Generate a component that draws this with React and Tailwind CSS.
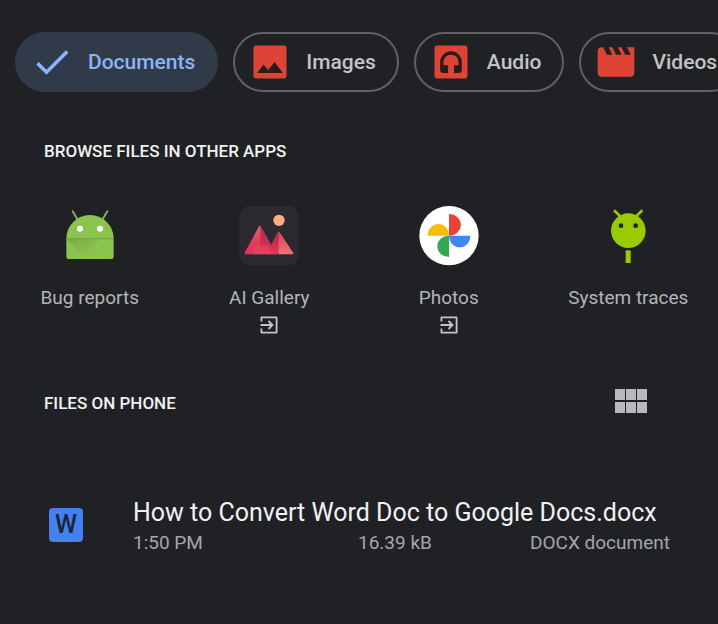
import clsx from 'clsx'

const DoneIcon = () => (
  <svg viewBox="0 0 24 24" className="size-11 shrink-0" fill="currentColor" aria-hidden="true">
    <path d="M9 16.2L4.8 12l-1.4 1.4L9 19 21 7l-1.4-1.4L9 16.2z" />
  </svg>
)

const ImageIcon = () => (
  <svg viewBox="0 0 24 24" className="size-11 shrink-0" aria-hidden="true">
    <rect x="3" y="3" width="18" height="18" rx="1.5" fill="#dd4436" />
    <path d="M5 18l3.5-4.6 2.5 3 3.5-4.4 4.5 6z" fill="#2f1a1b" />
  </svg>
)

const AudioIcon = () => (
  <svg viewBox="0 0 24 24" className="size-11 shrink-0" aria-hidden="true">
    <rect x="3" y="3" width="18" height="18" rx="1.5" fill="#dd4436" />
    <path
      d="M12 6.2a5.9 5.9 0 0 0-5.9 5.9v4.4c0 .9.6 1.5 1.5 1.5h2.8v-4.2H7.9v-1.7a4.1 4.1 0 0 1 8.2 0v1.7h-2.5V18h2.8c.9 0 1.5-.6 1.5-1.5v-4.4A5.9 5.9 0 0 0 12 6.2z"
      fill="#2f1a1b"
    />
  </svg>
)

const VideoIcon = () => (
  <svg viewBox="0 0 24 24" className="size-11 shrink-0" fill="#dd4436" aria-hidden="true">
    <path d="M18 4l2 4h-3l-2-4h-2l2 4h-3l-2-4H8l2 4H7L5 4H4c-1.1 0-1.99.9-1.99 2L2 18c0 1.1.9 2 2 2h16c1.1 0 2-.9 2-2V4h-4z" />
  </svg>
)

const BugReportsIcon = () => (
  <svg viewBox="88 33 180 180" className="size-[60px]" aria-hidden="true">
    <defs>
      <linearGradient id="fold" x1="0" y1="0" x2="0.6" y2="0.8">
        <stop offset="0" stopColor="#6b9c3c" />
        <stop offset="1" stopColor="#8bc34f" />
      </linearGradient>
    </defs>
    <path d="M126 49l15 25M230 49l-15 25" stroke="#7fb254" strokeWidth="6" strokeLinecap="round" />
    <path d="M107 131a71 71 0 0 1 142 0z" fill="#8bc34f" />
    <path d="M107 131h142v54q0 7-7 7H114q-7 0-7-7z" fill="#8bc34f" />
    <path d="M107 131h100l-39 61z" fill="url(#fold)" opacity="0.6" />
    <path d="M107 131h142" stroke="#76a943" strokeWidth="3" />
    <circle cx="148" cy="101" r="9" fill="#fff" />
    <circle cx="208" cy="101" r="9" fill="#fff" />
  </svg>
)

const GalleryIcon = () => (
  <svg viewBox="88 33 180 180" className="size-[60px]" aria-hidden="true">
    <defs>
      <linearGradient id="lit" x1="0" y1="0" x2="0" y2="1">
        <stop offset="0" stopColor="#ea6266" />
        <stop offset="0.6" stopColor="#e03c5c" />
        <stop offset="1" stopColor="#e2325a" />
      </linearGradient>
      <linearGradient id="shade" x1="0" y1="0" x2="0" y2="1">
        <stop offset="0" stopColor="#a92f4c" />
        <stop offset="0.6" stopColor="#cf2d55" />
        <stop offset="1" stopColor="#e23a5c" />
      </linearGradient>
      <linearGradient id="far" x1="0" y1="0" x2="0" y2="1">
        <stop offset="0" stopColor="#dc4058" />
        <stop offset="1" stopColor="#ee7474" />
      </linearGradient>
    </defs>
    <rect x="89" y="33" width="178" height="178" rx="32" fill="#2b2a30" />
    <circle cx="208" cy="76" r="17" fill="#ffac83" />
    <path d="M208 110v68h-26l4-32 18-34q2-3 4-2z" fill="url(#shade)" />
    <path d="M207 110q2 0 4 3l40 61q1 4-3 4h-41z" fill="url(#far)" />
    <path d="M150 92q3 0 5 4l43 77q1 5-4 5h-44z" fill="url(#shade)" />
    <path d="M152 92v86h-44q-5 0-3-5l42-77q2-4 5-4z" fill="url(#lit)" />
    <path d="M135 150h38l13 28h-58z" fill="#ee5a66" opacity="0.3" />
  </svg>
)

const PhotosIcon = () => (
  <svg viewBox="87 33 180 180" className="size-[60px]" aria-hidden="true">
    <circle cx="177" cy="122" r="89" fill="#fff" />
    <path d="M177 57a35 32 0 0 1 0 65z" fill="#ea4335" />
    <path d="M241 122a32 35 0 0 1-64 0z" fill="#4285f4" />
    <path d="M177 186a35 32 0 0 1 0-64z" fill="#34a853" />
    <path d="M113 122a32 35 0 0 1 64 0z" fill="#fbbc04" />
  </svg>
)

const TracesIcon = () => (
  <svg viewBox="115 33 180 180" className="size-[60px]" aria-hidden="true">
    <path d="M163 46l20 19M248 46l-20 19" stroke="#99cc00" strokeWidth="8" />
    <circle cx="206" cy="107" r="52" fill="#99cc00" />
    <path d="M198 166h15v38h-15z" fill="#99cc00" />
    <circle cx="184" cy="92" r="7" fill="#202124" />
    <circle cx="228" cy="92" r="7" fill="#202124" />
  </svg>
)

const OpenExternalIcon = () => (
  <svg
    viewBox="0 0 24 24"
    className="size-6"
    fill="none"
    stroke="#c4c5c8"
    strokeWidth="1.8"
    strokeLinejoin="round"
    aria-hidden="true"
  >
    <path d="M4.4 8.5V4.4h15.2v15.2H4.4v-4.1" />
    <path d="M3.5 12h11.8M11.5 8l4 4-4 4" strokeLinejoin="miter" />
  </svg>
)

const FILTERS = [
  { label: 'Documents', Icon: DoneIcon, active: true },
  { label: 'Images', Icon: ImageIcon },
  { label: 'Audio', Icon: AudioIcon },
  { label: 'Videos', Icon: VideoIcon },
]

const APPS = [
  { name: 'Bug reports', Icon: BugReportsIcon },
  { name: 'AI Gallery', Icon: GalleryIcon, external: true },
  { name: 'Photos', Icon: PhotosIcon, external: true },
  { name: 'System traces', Icon: TracesIcon },
]

const FILES = [
  {
    name: 'How to Convert Word Doc to Google Docs.docx',
    time: '1:50 PM',
    size: '16.39 kB',
    type: 'DOCX document',
  },
]

function FilterChip({ label, Icon, active }) {
  return (
    <button
      type="button"
      aria-pressed={Boolean(active)}
      className={clsx(
        'flex shrink-0 items-center gap-[14px] rounded-full border-2 py-[6px] pl-[13px] pr-[21px] text-[21px] leading-6 font-medium',
        active ? 'border-[#313a49] bg-[#313a49] text-[#8ab4f8]' : 'border-[#5f6164] text-[#c3c4c7]'
      )}
    >
      <Icon />
      {label}
    </button>
  )
}

function AppShortcut({ name, Icon, external }) {
  return (
    <button type="button" className="flex flex-col items-center">
      <Icon />
      <span className="mt-5 text-[19px] leading-6 whitespace-nowrap text-[#b4b5b8]">{name}</span>
      {external && (
        <span className="mt-[3px]">
          <OpenExternalIcon />
        </span>
      )}
    </button>
  )
}

function FileRow({ file }) {
  return (
    <li className="flex items-center">
      <div className="flex w-[133px] shrink-0 pl-[49px]">
        <span className="flex size-[34px] items-center justify-center rounded bg-[#4580f0] text-[25px] leading-8 font-medium text-[#1c2436]">
          W
        </span>
      </div>
      <div className="min-w-0 flex-1 pt-1">
        <div className="text-[25px] leading-8 whitespace-nowrap text-[#f1f2f3]">{file.name}</div>
        <div className="grid grid-cols-[225fr_172fr_188fr] text-[19px] leading-7 whitespace-nowrap text-[#a5a6a9]">
          <span>{file.time}</span>
          <span>{file.size}</span>
          <span>{file.type}</span>
        </div>
      </div>
    </li>
  )
}

function App() {
  return (
    <main className="min-h-screen overflow-hidden bg-[#202124] pt-8 font-['Roboto',sans-serif]">
      <nav aria-label="File types" className="flex gap-[15px] overflow-hidden pl-[15px]">
        {FILTERS.map((filter) => (
          <FilterChip key={filter.label} {...filter} />
        ))}
      </nav>

      <section>
        <h2 className="mt-[47px] pl-11 text-[17px] leading-6 font-medium text-[#f1f2f3]">BROWSE FILES IN OTHER APPS</h2>
        <div className="mt-[43px] grid grid-cols-4 items-start">
          {APPS.map((app) => (
            <AppShortcut key={app.name} {...app} />
          ))}
        </div>
      </section>

      <section>
        <div className="mt-11 flex h-11 items-center justify-between pr-[70px] pl-11">
          <h2 className="text-[17px] leading-6 font-medium text-[#f1f2f3]">FILES ON PHONE</h2>
          <button type="button" aria-label="Grid view" className="pb-1">
            <svg viewBox="0 0 33 26" className="h-[26px] w-[33px]" fill="#b9babd" aria-hidden="true">
              <path d="M0 1h10v11H0zM11 1h10v11H11zM22 1h10v11H22zM0 14h10v11H0zM11 14h10v11H11zM22 14h10v11H22z" />
            </svg>
          </button>
        </div>
        <ul className="mt-[68px]">
          {FILES.map((file) => (
            <FileRow key={file.name} file={file} />
          ))}
        </ul>
      </section>
    </main>
  )
}

export default App
